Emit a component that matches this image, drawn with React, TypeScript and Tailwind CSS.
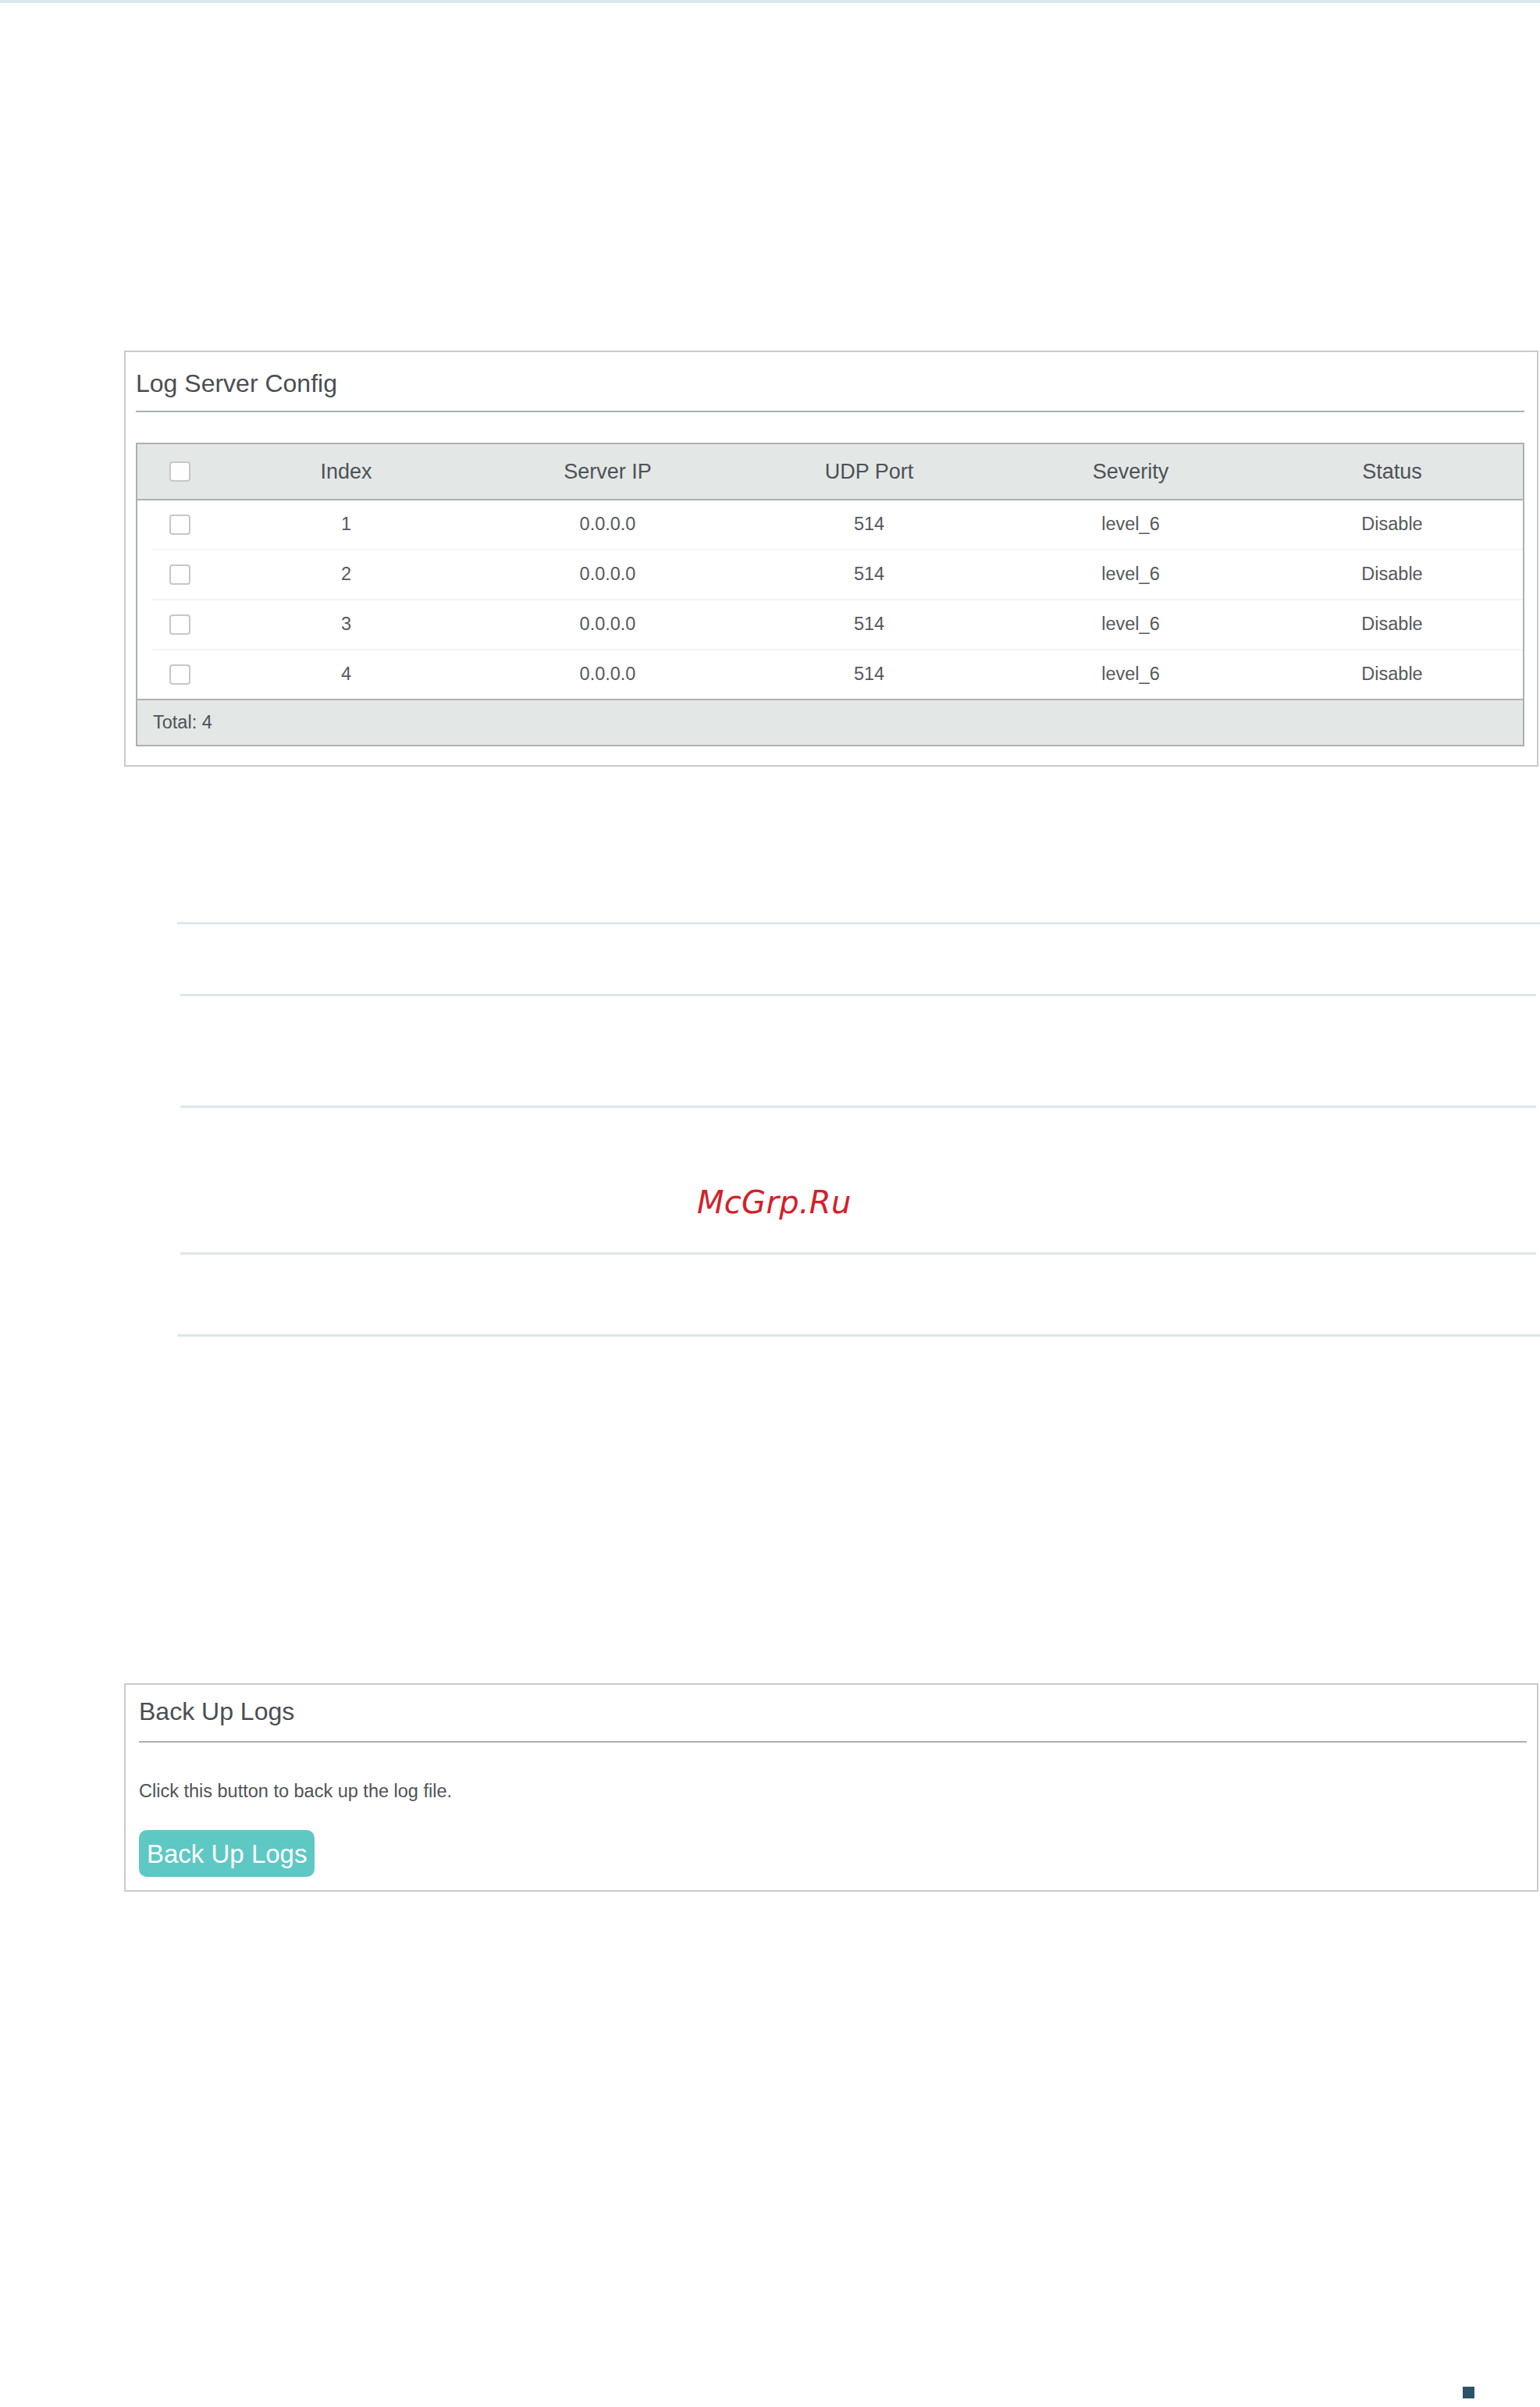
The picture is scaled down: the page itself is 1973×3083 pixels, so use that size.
const columns = ['Index', 'Server IP', 'UDP Port', 'Severity', 'Status']

const rows = [
  { index: 1, ip: '0.0.0.0', port: 514, severity: 'level_6', status: 'Disable' },
  { index: 2, ip: '0.0.0.0', port: 514, severity: 'level_6', status: 'Disable' },
  { index: 3, ip: '0.0.0.0', port: 514, severity: 'level_6', status: 'Disable' },
  { index: 4, ip: '0.0.0.0', port: 514, severity: 'level_6', status: 'Disable' },
]

function Checkbox() {
  return <span className="block w-[27px] h-[26px] rounded-[4px] border-2 border-[#c6c8c8] bg-white" />
}

function PanelTitle({ children, gap }: { children: string; gap: string }) {
  return (
    <>
      <h2 className="text-[32px] leading-[36px] text-[#4a4e52] font-normal">{children}</h2>
      <div className={`${gap} h-[2px] bg-[#abafb1]`} />
    </>
  )
}

function LogServerTable() {
  return (
    <div className="mt-[39px] border-2 border-[#adb1b0] text-[#55595d]">
      {/* Header */}
      <div className="h-[72px] grid grid-cols-[100px_repeat(5,1fr)] items-center bg-[#e3e7e6] border-b-2 border-[#adb1b0] text-[27px] text-[#4d5256]">
        <div className="pl-[41px]">
          <Checkbox />
        </div>
        {columns.map((c) => (
          <div key={c} className="text-center">
            {c}
          </div>
        ))}
      </div>

      {/* Rows */}
      {rows.map((r, i) => (
        <div key={r.index}>
          {i > 0 && <div className="ml-[19px] h-[2px] bg-[#f3f4f4]" />}
          <div className="h-[62px] grid grid-cols-[100px_repeat(5,1fr)] items-center text-[23.5px]">
            <div className="pl-[41px]">
              <Checkbox />
            </div>
            <div className="text-center">{r.index}</div>
            <div className="text-center">{r.ip}</div>
            <div className="text-center">{r.port}</div>
            <div className="text-center">{r.severity}</div>
            <div className="text-center">{r.status}</div>
          </div>
        </div>
      ))}

      {/* Footer */}
      <div className="h-[59px] flex items-center pl-[20px] bg-[#e3e7e6] border-t-2 border-[#adb1b0] text-[23.5px] text-[#4f5357]">
        Total: 4
      </div>
    </div>
  )
}

export default function App() {
  return (
    <div
      className="w-[1973px] min-h-[3083px] bg-white flex flex-col"
      style={{ fontFamily: '"Liberation Sans", Arial, sans-serif' }}
    >
      <div className="h-[4px] bg-[#dde7ec]" />

      {/* Log Server Config */}
      <section className="mt-[445px] ml-[159px] w-[1812px] border-2 border-[#cacaca] pt-[22px] pb-[24px] pl-[13px] pr-[16px]">
        <PanelTitle gap="mt-[17px]">Log Server Config</PanelTitle>
        <LogServerTable />
      </section>

      {/* separators */}
      <div className="mt-[199px] ml-[227px] w-[1746px] h-[3px] bg-[#dde7eb]" />
      <div className="mt-[89px] ml-[231px] w-[1737px] h-[3px] bg-[#dde7eb]" />
      <div className="mt-[140px] ml-[231px] w-[1737px] h-[3px] bg-[#dde7eb]" />
      <div
        className="mt-[97px] ml-[893px] text-[40px] leading-[48px] italic tracking-[0.3px] text-[#d4202a]"
        style={{ fontFamily: '"DejaVu Sans", sans-serif' }}
      >
        McGrp.Ru
      </div>
      <div className="mt-[40px] ml-[231px] w-[1737px] h-[3px] bg-[#dde7eb]" />
      <div className="mt-[102px] ml-[227px] w-[1746px] h-[3px] bg-[#dde7eb]" />

      {/* Back Up Logs */}
      <section className="mt-[444px] ml-[159px] w-[1812px] border-2 border-[#cacaca] pt-[16px] pb-[17px] pl-[17px] pr-[13px]">
        <PanelTitle gap="mt-[20px]">Back Up Logs</PanelTitle>
        <p className="mt-[48px] text-[23.5px] leading-[28px] text-[#4f5357]">Click this button to back up the log file.</p>
        <button className="mt-[36px] h-[60px] px-[10px] rounded-[10px] bg-[#5ec8c5] text-white text-[33px] leading-none">
          Back Up Logs
        </button>
      </section>

      <div className="mt-[634px] ml-[1874px] w-[15px] h-[15px] bg-[#2a5468]" />
    </div>
  )
}
